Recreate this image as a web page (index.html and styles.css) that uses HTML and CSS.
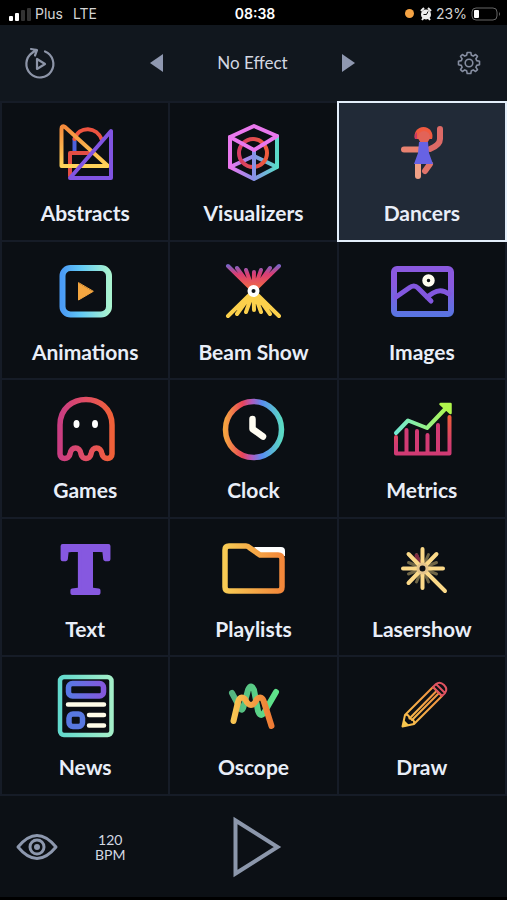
FILE: index.html
```
<!DOCTYPE html>
<html lang="en">
<head>
    <meta charset="UTF-8">
    <meta name="viewport" content="width=device-width, initial-scale=1.0">
    <link rel="stylesheet" href="styles.css">
    <title>Effects</title>
</head>
<body>
<div class="status">
    <div class="status-left">
        <svg class="signal" viewBox="0 0 22 14" width="22" height="14">
            <rect x="0" y="9" width="4" height="5" rx="1" fill="#fff"/>
            <rect x="6" y="6" width="4" height="8" rx="1" fill="#fff"/>
            <rect x="12" y="3" width="4" height="11" rx="1" fill="#333"/>
            <rect x="18" y="1" width="4" height="13" rx="1" fill="#333"/>
        </svg>
        <span>Plus</span>
        <span class="network">LTE</span>
    </div>
    <span class="time">08:38</span>
    <div class="status-right">
        <span class="dot"></span>
        <svg viewBox="0 0 12 14" width="12" height="14">
            <path d="M1 4L4 1M11 4L8 1M2 13L3.500 11M10 13L8.500 11" stroke="#eee" stroke-width="2"/>
            <circle cx="6" cy="7.500" r="5" fill="#eee"/>
            <path d="M3.500 7.500H6.500L8 4.500" fill="none" stroke="#111" stroke-width="1"/>
        </svg>
        <span>23%</span>
        <svg class="battery" viewBox="0 0 30 14" width="30" height="14">
            <rect x="1" y="1" width="25" height="12" rx="4" fill="none" stroke="#666"/>
            <rect x="3" y="3" width="5" height="8" rx="1" fill="#fff"/>
            <path d="M28 5q2 2 0 4z" fill="#666"/>
        </svg>
    </div>
</div>

<header class="header">
    <button type="button" class="icon-btn" aria-label="Restart">
        <svg viewBox="0 0 32 34" width="32" height="34" fill="none" stroke="#8d95a8" stroke-width="2.200" stroke-linecap="round" stroke-linejoin="round">
            <path d="M21 5.500A13.500 13.500 0 1 1 8 7L12 4M7 3L13 4L11 9.500"/>
            <path d="M13 13V23L21 18Z"/>
        </svg>
    </button>
    <div class="effect">
        <button type="button" class="icon-btn" aria-label="Previous effect">
            <svg viewBox="0 0 14 18" width="14" height="18"><path d="M13 0V18L0 9Z" fill="#8f98b0"/></svg>
        </button>
        <span class="effect-name">No Effect</span>
        <button type="button" class="icon-btn" aria-label="Next effect">
            <svg viewBox="0 0 14 18" width="14" height="18"><path d="M1 0V18L14 9Z" fill="#8f98b0"/></svg>
        </button>
    </div>
    <button type="button" class="icon-btn settings" aria-label="Settings">
        <svg viewBox="0 0 24 24" width="24" height="24" fill="none" stroke="#858da0" stroke-width="1.600" stroke-linejoin="round">
            <path d="M10.200 1.500H13.800L14.400 4.300L16.200 5.100L18.600 3.500L20.500 5.400L18.900 7.800L19.700 9.600L22.500 10.200V13.800L19.700 14.400L18.900 16.200L20.500 18.600L18.600 20.500L16.200 18.900L14.400 19.700L13.800 22.500H10.200L9.600 19.700L7.800 18.900L5.400 20.500L3.500 18.600L5.100 16.200L4.300 14.400L1.500 13.800V10.200L4.300 9.600L5.100 7.800L3.500 5.400L5.400 3.500L7.800 5.100L9.600 4.300Z"/>
            <circle cx="12" cy="12" r="3.800"/>
        </svg>
    </button>
</header>

<main class="grid">
    <button type="button" class="cell">
        <svg class="icon" viewBox="0 0 64 64">
            <defs>
                <linearGradient id="amber" x1="0" y1="0" x2="0" y2="1"><stop offset="0" stop-color="#f58a3c"/><stop offset="1" stop-color="#ffd35a"/></linearGradient>
            </defs>
            <path d="M21.500 31V18" stroke="#4d62dc"/>
            <path d="M21.500 18C26 4.500 44 5 49 19" stroke="#ee5340"/>
            <path d="M39 32H17V55" stroke="#e24d43"/>
            <path d="M8.500 8V45H55L12 6Q8.500 4 8.500 8Z" stroke="url(#amber)"/>
            <path d="M58 10V57H17Z" stroke="#8154e2"/>
        </svg>
        <span class="label">Abstracts</span>
    </button>
    <button type="button" class="cell">
        <svg class="icon" viewBox="0 0 64 64">
            <defs>
                <linearGradient id="cube" gradientUnits="userSpaceOnUse" x1="9" y1="46" x2="56" y2="46"><stop offset="0" stop-color="#ee78f0"/><stop offset=".5" stop-color="#8790e8"/><stop offset="1" stop-color="#5adbc8"/></linearGradient>
                <linearGradient id="ring"><stop offset="0" stop-color="#d63c64"/><stop offset="1" stop-color="#ef5b3c"/></linearGradient>
            </defs>
            <path d="M9 46L33 35L56 46" stroke="url(#cube)"/>
            <circle cx="32" cy="32" r="14" stroke="url(#ring)"/>
            <path d="M9 16V46L33 58L56 46V15M33 29V58" stroke="url(#cube)"/>
            <path d="M9 46V16L33 5L56 15L33 29L9 16" stroke="#e978ed"/>
        </svg>
        <span class="label">Visualizers</span>
    </button>
    <button type="button" class="cell selected" aria-pressed="true">
        <svg class="icon" viewBox="0 0 64 64">
            <g stroke-width="6">
                <path d="M14 28.500H29" stroke="#e88270"/>
                <path d="M50 8V18Q50 24 40 28" stroke="#dc6a66"/>
                <path d="M28 42V55" stroke="#f0a086"/>
                <path d="M40 43L35 50" stroke="#e0736a"/>
            </g>
            <path d="M25 18A9 9 0 1 1 42 18Z" fill="#f05a40"/>
            <path d="M25 18Q24 13 27 11V18Z" fill="#c93867"/>
            <circle cx="34" cy="16" r="6" fill="#e26358"/>
            <path d="M29 21H38L39 32L43 43H24L28 32Z" fill="#6762e4"/>
        </svg>
        <span class="label">Dancers</span>
    </button>

    <button type="button" class="cell">
        <svg class="icon" viewBox="0 0 64 64">
            <defs>
                <linearGradient id="frame"><stop offset="0" stop-color="#4b9cf6"/><stop offset=".4" stop-color="#62c9f5"/><stop offset="1" stop-color="#a9f3d0"/></linearGradient>
            </defs>
            <rect x="9.500" y="8" width="46.500" height="46.500" rx="8" stroke="url(#frame)" stroke-width="6"/>
            <path d="M25.500 23V40L40 31.500Z" fill="#f4a640" stroke="#f4a640" stroke-width="1"/>
        </svg>
        <span class="label">Animations</span>
    </button>
    <button type="button" class="cell">
        <svg class="icon" viewBox="0 0 64 64">
            <defs>
                <linearGradient id="beam" gradientUnits="userSpaceOnUse" x1="0" y1="5" x2="0" y2="31"><stop offset="0" stop-color="#7765c8"/><stop offset=".35" stop-color="#da3c73"/><stop offset="1" stop-color="#f5743c"/></linearGradient>
            </defs>
            <path d="M7 6L32.500 31L16 8M25 10L32.500 31L33 12M40 10L32.500 31L49 8M32.500 31L58 6" stroke="url(#beam)"/>
            <path d="M7 56L32.500 31L16 54M25 52L32.500 31L33 50M40 52L32.500 31L49 54M32.500 31L58 56" stroke="#fbd04c"/>
            <circle cx="32.500" cy="31" r="4" fill="#10141a" stroke="#fff"/>
        </svg>
        <span class="label">Beam Show</span>
    </button>
    <button type="button" class="cell">
        <svg class="icon" viewBox="0 0 64 64">
            <defs>
                <linearGradient id="photo" gradientUnits="userSpaceOnUse" x1="0" y1="24" x2="0" y2="56"><stop offset="0" stop-color="#8a59df"/><stop offset="1" stop-color="#5875e2"/></linearGradient>
            </defs>
            <rect x="4" y="9" width="57" height="45" rx="3" stroke="url(#photo)" stroke-width="6"/>
            <path d="M6 37L19 28Q24 24 28 28L41 41M37 37L43 33Q51 28 59 34" stroke="#8257df" stroke-width="5"/>
            <circle cx="38.500" cy="20.500" r="4" stroke="#fffdf0" stroke-width="4.500"/>
        </svg>
        <span class="label">Images</span>
    </button>

    <button type="button" class="cell">
        <svg class="icon" viewBox="0 0 64 64">
            <defs>
                <linearGradient id="ghost"><stop offset="0" stop-color="#ca3d82"/><stop offset=".5" stop-color="#e14e64"/><stop offset="1" stop-color="#f06038"/></linearGradient>
            </defs>
            <path d="M7 56V27C7 -7 59 -7 59 27V56C59 62 50 62 49 56C48 48 39 48 38 56C37 62 29 62 28 56C27 48 18 48 17 56C16 62 7 62 7 56Z" stroke="url(#ghost)" stroke-width="5.500"/>
            <ellipse cx="23.500" cy="26" rx="3" ry="4" fill="#fff"/>
            <ellipse cx="42" cy="26" rx="3" ry="4" fill="#fff"/>
        </svg>
        <span class="label">Games</span>
    </button>
    <button type="button" class="cell">
        <svg class="icon" viewBox="0 0 64 64">
            <defs>
                <linearGradient id="dial"><stop offset="0" stop-color="#f6a340"/><stop offset=".3" stop-color="#e94459"/><stop offset=".47" stop-color="#b05bc0"/><stop offset=".65" stop-color="#588df0"/><stop offset="1" stop-color="#5ad9c4"/></linearGradient>
            </defs>
            <circle cx="32.500" cy="31.500" r="28" stroke="url(#dial)" stroke-width="5.500"/>
            <path d="M31.500 21V31L42 38.500" stroke="#fffdf2" stroke-width="6.500"/>
        </svg>
        <span class="label">Clock</span>
    </button>
    <button type="button" class="cell">
        <svg class="icon" viewBox="0 0 64 64">
            <defs>
                <linearGradient id="axis" gradientUnits="userSpaceOnUse" x1="0" y1="19" x2="0" y2="48"><stop offset="0" stop-color="#ee5c3c"/><stop offset="1" stop-color="#d13b74"/></linearGradient>
                <linearGradient id="trend" gradientUnits="userSpaceOnUse" x1="6" y1="0" x2="60" y2="0"><stop offset="0" stop-color="#72e9d2"/><stop offset="1" stop-color="#b0f64c"/></linearGradient>
            </defs>
            <path d="M16.500 32V55M27 33V55M37.500 37V55M48 27V55" stroke="#d13b74"/>
            <path d="M6 39V55.500H59.500V19" stroke="url(#axis)"/>
            <path d="M6 35L18 22.500L37 30L57 9" stroke="url(#trend)"/>
            <path d="M50.500 6H60.500V15Z" fill="#b0f64c" stroke="#b0f64c" stroke-width="2.500"/>
        </svg>
        <span class="label">Metrics</span>
    </button>

    <button type="button" class="cell">
        <svg class="icon" viewBox="0 0 64 64" aria-hidden="true">
            <text class="serif-t" x="32.500" y="56" text-anchor="middle">T</text>
        </svg>
        <span class="label">Text</span>
    </button>
    <button type="button" class="cell">
        <svg class="icon" viewBox="0 0 64 64">
            <defs>
                <linearGradient id="folder"><stop offset="0" stop-color="#f8cb54"/><stop offset="1" stop-color="#f3873a"/></linearGradient>
            </defs>
            <path d="M33 10H60Q64 10 64 14V19H40Z" fill="#fff"/>
            <path d="M8 9H25Q27 9 29 11L39 18H57Q61 18 61 22V50Q61 54 57 54H8Q4 54 4 50V13Q4 9 8 9Z" stroke="url(#folder)" stroke-width="5.500"/>
        </svg>
        <span class="label">Playlists</span>
    </button>
    <button type="button" class="cell">
        <svg class="icon" viewBox="0 0 64 64">
            <path d="M18.500 25.500L46.500 37M18.500 37L46.500 25.500M26.500 17.500L38.500 45M26.500 45L38.500 17.500" stroke="#6f6546" stroke-width="3"/>
            <path d="M26.500 18.500L29 25" stroke="#7d2c42"/>
            <path d="M13 31.500H53M32.500 12V51M18.500 17L32.500 31.500M46.500 17L18.500 46M32.500 31.500L55 54" stroke="#fbd989"/>
            <circle cx="32.500" cy="31.500" r="4.500" fill="#0c1015" stroke="#e4c48b" stroke-width="3"/>
        </svg>
        <span class="label">Lasershow</span>
    </button>

    <button type="button" class="cell">
        <svg class="icon" viewBox="0 0 64 64">
            <defs>
                <linearGradient id="page"><stop offset="0" stop-color="#62d9cd"/><stop offset="1" stop-color="#a4efc9"/></linearGradient>
                <linearGradient id="banner"><stop offset="0" stop-color="#5878e4"/><stop offset="1" stop-color="#8458dc"/></linearGradient>
            </defs>
            <rect x="7" y="2" width="51.500" height="58" rx="4" stroke="url(#page)" stroke-width="4.500"/>
            <rect x="15.500" y="8.500" width="35" height="12.500" rx="4" stroke="url(#banner)" stroke-width="5.500"/>
            <rect x="16" y="39" width="13.500" height="12.500" rx="4" stroke="#5878e0" stroke-width="5.500"/>
            <path d="M15 29.500H51M36 40H51M36 50.500H51" stroke="#fffde9" stroke-width="4.500"/>
        </svg>
        <span class="label">News</span>
    </button>
    <button type="button" class="cell">
        <svg class="icon" viewBox="0 0 64 64">
            <defs>
                <linearGradient id="wave"><stop offset="0" stop-color="#f9c552"/><stop offset="1" stop-color="#ef7b35"/></linearGradient>
                <linearGradient id="wave2"><stop offset="0" stop-color="#54b480"/><stop offset="1" stop-color="#5fe68b"/></linearGradient>
            </defs>
            <g stroke-width="6">
                <path d="M11 18L18 31Q21 39 23 30L27 15Q30 8 33 15L37 36Q40 44 44 36L55 17" stroke="url(#wave2)"/>
                <path d="M12.500 46L17 27Q19 20 24 24Q30 36 36 24Q41 20 43 27L50.500 51" stroke="url(#wave)"/>
            </g>
        </svg>
        <span class="label">Oscope</span>
    </button>
    <button type="button" class="cell">
        <svg class="icon" viewBox="0 0 64 64">
            <defs>
                <linearGradient id="pencil" x1="0" y1="1" x2="1" y2="0"><stop offset="0" stop-color="#f9c34e"/><stop offset="1" stop-color="#ef8a3e"/></linearGradient>
            </defs>
            <g stroke-width="2">
                <path d="M43 12L15 40L12.500 51.500L24 49L52 21ZM15 40Q19 39 19.500 43.500Q25 44 24 49M19.500 43.500L46.500 16M22 45L49 18" stroke="url(#pencil)"/>
                <path d="M43 12L46 9Q50 6 54 10Q58 14 55 18L52 21ZM46 9L55 18" stroke="#df5360"/>
                <path d="M12.500 51.500L14 45L19 50Z" fill="#f8c84e"/>
            </g>
        </svg>
        <span class="label">Draw</span>
    </button>
</main>

<footer class="footer">
    <div class="footer-left">
        <button type="button" class="icon-btn" aria-label="Preview">
            <svg viewBox="0 0 42 28" width="42" height="28" fill="none" stroke="#8d98ae" stroke-width="3">
                <path d="M2 14Q21 -9 40 14Q21 37 2 14Z" stroke-linejoin="round"/>
                <circle cx="21" cy="14" r="7"/>
                <circle cx="21" cy="14" r="3" fill="#8d98ae" stroke="none"/>
            </svg>
        </button>
        <button type="button" class="bpm"><span>120</span><span>BPM</span></button>
    </div>
    <button type="button" class="icon-btn" aria-label="Play">
        <svg viewBox="0 0 56 62" width="56" height="62"><path d="M9.500 4.500V57.500L51.500 31Z" fill="none" stroke="#8c97ab" stroke-width="4"/></svg>
    </button>
</footer>
</body>
</html>
```
FILE: styles.css
```
* {
    box-sizing: border-box;
}

body {
    margin: 0;
    min-height: 100vh;
    padding-bottom: 3px;
    display: flex;
    flex-direction: column;
    background: #000;
    color: #e9eef8;
    font-family: Lato, "Liberation Sans", sans-serif;
}

button {
    margin: 0;
    padding: 0;
    border: none;
    background: none;
    color: inherit;
    font-family: inherit;
    cursor: pointer;
}

svg {
    display: block;
}

.status {
    height: 25px;
    padding: 2px 6px 0 9px;
    display: grid;
    grid-template-columns: 1fr auto 1fr;
    align-items: center;
    color: #d4d4d4;
    font-family: Inter, sans-serif;
    font-size: 14px;
    line-height: 20px;
}

.status-left,
.status-right {
    display: flex;
    align-items: center;
    gap: 4px;
}

.status-right {
    justify-content: flex-end;
}

.network {
    margin-left: 6px;
}

.time {
    color: #fff;
    font-weight: 600;
}

.dot {
    width: 9px;
    height: 9px;
    margin-right: 2px;
    border-radius: 50%;
    background: #f5a344;
}

.header {
    height: 76px;
    padding: 0 26px 0 24px;
    display: grid;
    grid-template-columns: 1fr auto 1fr;
    align-items: center;
    background: #11171e;
}

.effect {
    width: 206px;
    display: flex;
    align-items: center;
    justify-content: space-between;
}

.effect-name {
    font-size: 17px;
    line-height: 24px;
    color: #d3d8e2;
}

.settings {
    justify-self: end;
}

.grid {
    flex: 1;
    padding: 2px;
    display: grid;
    grid-template-columns: repeat(3, 1fr);
    grid-auto-rows: 1fr;
    gap: 2px;
    background: #161c27;
}

.cell {
    padding: 18px 0 12px;
    display: flex;
    flex-direction: column;
    align-items: center;
    gap: 16px;
    background: #0b0f14;
}

.cell.selected {
    background: #212a37;
    outline: 2px solid #e4effb;
}

.icon {
    width: 64px;
    height: 64px;
    overflow: visible;
    fill: none;
    stroke-width: 4;
    stroke-linecap: round;
    stroke-linejoin: round;
}

.serif-t {
    font-family: "Liberation Serif", serif;
    font-weight: bold;
    font-size: 72px;
    fill: #8658e0;
    stroke: #8658e0;
}

.label {
    font-size: 21px;
    font-weight: bold;
    line-height: 24px;
}

.footer {
    height: 101px;
    padding: 0 16px;
    display: grid;
    grid-template-columns: 1fr auto 1fr;
    align-items: center;
    background: #0c1015;
}

.footer-left {
    display: flex;
    align-items: center;
    gap: 37px;
}

.bpm {
    display: flex;
    flex-direction: column;
    align-items: center;
    font-size: 14px;
    line-height: 15px;
    color: #d3d8e2;
}
```
